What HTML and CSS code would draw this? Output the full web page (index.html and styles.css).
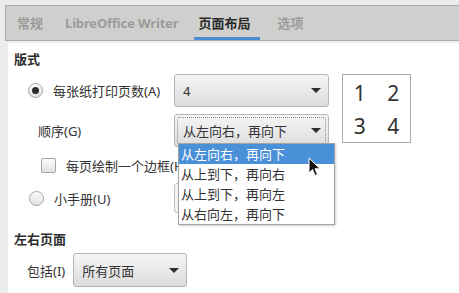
FILE: index.html
```html
<!DOCTYPE html>
<html>
<head>
    <meta charset="utf-8">
    <title>页面布局</title>
    <link rel="stylesheet" href="styles.css">
</head>
<body>
    <div class="tabs">
        <div class="tab">常规</div>
        <div class="tab">LibreOffice Writer</div>
        <div class="tab active">页面布局</div>
        <div class="tab">选项</div>
    </div>

    <div class="panel">
        <div class="heading">版式</div>

        <div class="option-grid">
            <div class="choice row1">
                <span class="radio checked"></span>
                <span>每张纸打印页数(A)</span>
            </div>
            <div class="combo row1-combo">
                <span>4</span>
                <span class="arrow"></span>
            </div>
            <div class="preview">
                <span>1</span><span>2</span>
                <span>3</span><span>4</span>
            </div>

            <div class="sub-label row2">顺序(G)</div>
            <div class="combo focused row2-combo">
                <span>从左向右，再向下</span>
                <span class="arrow"></span>
            </div>

            <div class="choice check-row row3">
                <span class="checkbox"></span>
                <span>每页绘制一个边框(H)</span>
            </div>

            <div class="choice radio-row row4">
                <span class="radio"></span>
                <span>小手册(U)</span>
            </div>
            <div class="hidden-box row4-box"></div>
        </div>

        <div class="heading second">左右页面</div>

        <div class="include-row">
            <span class="include-label">包括(I)</span>
            <div class="combo small">
                <span>所有页面</span>
                <span class="arrow"></span>
            </div>
        </div>
    </div>

    <!-- open dropdown list of the order combo -->
    <ul class="popup">
        <li class="selected">从左向右，再向下</li>
        <li>从上到下，再向右</li>
        <li>从上到下，再向左</li>
        <li>从右向左，再向下</li>
    </ul>

    <svg class="cursor" width="14" height="21" viewBox="0 0 14 21">
        <path d="M1 1 L1 16 L4.5 12.5 L7 18.5 L9.5 17.5 L7 11.8 L12 11.8 Z" fill="#111" stroke="#fff" stroke-width="1" stroke-linejoin="round"/>
    </svg>
</body>
</html>
```

FILE: styles.css
```css
body {
    margin: 0;
    background: #ececec;
    font-family: "Noto Sans", "Noto Sans CJK SC", sans-serif;
    font-size: 13px;
    color: #333;
    height: 293px;
    overflow: hidden;
    position: relative;
}
.tabs {
    display: flex;
    margin: 5px 0 0 5px;
    height: 34px;
    background: #cfcfcd;
    border-top: 1px solid #ababab;
    border-bottom: 1px solid #ababab;
    border-left: 1px solid #ababab;
    padding-left: 1px;
}
.tab {
    position: relative;
    padding: 0 10px;
    line-height: 34px;
    font-weight: bold;
    color: #9b9b9b;
}
.tab:nth-child(2) {
    letter-spacing: -0.15px;
    padding-left: 12px;
}
.tab.active {
    color: #2a2a2a;
    padding-right: 17px;
}
.tab.active::after {
    content: "";
    position: absolute;
    left: 6px;
    right: 7px;
    bottom: 0;
    height: 3px;
    background: #4a8ad0;
}
.panel {
    margin: 2px 0 0 8px;
    background: #fff;
    height: 250px;
    padding-left: 6px;
}
.heading {
    font-weight: bold;
    line-height: 18px;
    padding: 7px 0 6px;
    color: #2e2e2e;
}
.heading.second {
    padding: 16px 0 0;
}
.option-grid {
    display: grid;
    grid-template-columns: 160px 155px 13px 69px;
    grid-template-rows: 40px 34px 34px 32px;
}
.choice {
    display: flex;
    align-items: center;
    gap: 10px;
    grid-column: 1;
    white-space: nowrap;
}
.row1 {
    grid-row: 1;
    height: 33px;
    padding-left: 14px;
}
.row1-combo {
    grid-column: 2;
    grid-row: 1;
}
.sub-label {
    grid-column: 1;
    grid-row: 2;
    padding-left: 24px;
    display: flex;
    align-items: center;
    height: 33px;
}
.row2-combo {
    grid-column: 2;
    grid-row: 2;
}
.row3 {
    grid-row: 3;
    padding-left: 27px;
}
.row4 {
    grid-row: 4;
    padding-left: 15px;
}
.row4-box {
    grid-column: 2;
    grid-row: 4;
    align-self: center;
}
.preview {
    grid-column: 4;
    grid-row: 1 / 3;
    box-sizing: border-box;
    height: 69px;
    border: 1px solid #aaa;
    display: grid;
    grid-template-columns: 1fr 1fr;
    grid-template-rows: 1fr 1fr;
    padding: 1px 0 0 0;
    font-size: 21px;
    color: #333;
    align-items: center;
    justify-items: center;
}
.combo {
    box-sizing: border-box;
    height: 33px;
    width: 155px;
    border: 1px solid #b5b5b5;
    border-radius: 3px;
    background: linear-gradient(#f6f6f6, #dcdcdc);
    display: flex;
    align-items: center;
    justify-content: space-between;
    padding: 0 7px 0 8px;
    position: relative;
}
.combo.focused::after {
    content: "";
    position: absolute;
    inset: 2px;
    border: 1px dotted #8a8a8a;
    border-radius: 2px;
}
.combo.small {
    width: 114px;
    height: 34px;
}
.arrow {
    width: 0;
    height: 0;
    border-left: 5px solid transparent;
    border-right: 5px solid transparent;
    border-top: 5px solid #2e2e2e;
}
.hidden-box {
    box-sizing: border-box;
    height: 30px;
    width: 120px;
    border: 1px solid #c0c0c0;
    border-radius: 3px;
    background: #f4f4f4;
}
.radio {
    flex-shrink: 0;
    box-sizing: border-box;
    width: 15px;
    height: 15px;
    border-radius: 50%;
    border: 1px solid #a5a5a5;
    background: linear-gradient(#fbfbfb, #e2e2e2);
    display: flex;
    align-items: center;
    justify-content: center;
}
.radio.checked::after {
    content: "";
    width: 7px;
    height: 7px;
    border-radius: 50%;
    background: #2e2e2e;
}
.checkbox {
    flex-shrink: 0;
    box-sizing: border-box;
    width: 15px;
    height: 15px;
    border-radius: 2px;
    border: 1px solid #a5a5a5;
    background: linear-gradient(#fbfbfb, #e2e2e2);
}
.include-row {
    display: flex;
    align-items: center;
    gap: 8px;
    margin-top: 5px;
    padding-left: 13px;
}
.popup {
    position: absolute;
    left: 178px;
    top: 143px;
    width: 155px;
    margin: 0;
    padding: 0;
    list-style: none;
    background: #fff;
    border: 1px solid #a3a3a3;
    box-shadow: 1px 1px 2px rgba(0,0,0,0.2);
}
.popup li {
    height: 20px;
    line-height: 20px;
    padding-left: 2px;
    color: #333;
}
.popup li.selected {
    background: #4a90d9;
    color: #fff;
}
.cursor {
    position: absolute;
    left: 308px;
    top: 157px;
}
```
